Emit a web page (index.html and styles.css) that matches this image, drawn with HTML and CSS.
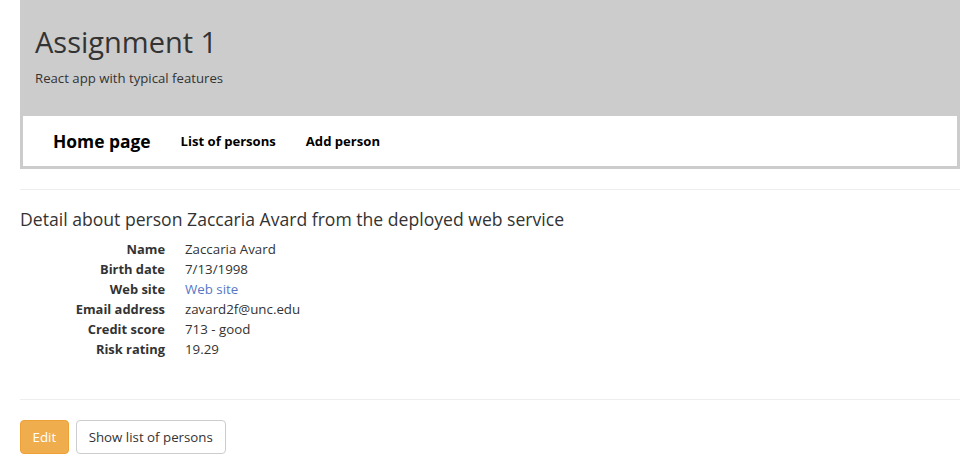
FILE: index.html
```html
<!DOCTYPE html>
<html>
<head>
<meta charset="utf-8">
<link rel="stylesheet" href="styles.css">
</head>
<body>
<div class="page">
  <header class="jumbo">
    <h1 class="title">Assignment 1</h1>
    <p class="subtitle">React app with typical features</p>
  </header>
  <nav class="nav">
    <a class="brand">Home page</a>
    <a class="link">List of persons</a>
    <a class="link">Add person</a>
  </nav>
  <hr class="rule rule-top">
  <h2 class="heading">Detail about person Zaccaria Avard from the deployed web service</h2>
  <dl class="details">
    <dt>Name</dt><dd>Zaccaria Avard</dd>
    <dt>Birth date</dt><dd>7/13/1998</dd>
    <dt>Web site</dt><dd><a class="site">Web site</a></dd>
    <dt>Email address</dt><dd>zavard2f@unc.edu</dd>
    <dt>Credit score</dt><dd>713 - good</dd>
    <dt>Risk rating</dt><dd>19.29</dd>
  </dl>
  <hr class="rule rule-bottom">
  <div class="actions">
    <button class="btn btn-warning">Edit</button>
    <button class="btn btn-default">Show list of persons</button>
  </div>
</div>
</body>
</html>
```

FILE: styles.css
```css
html, body {
  margin: 0;
  padding: 0;
  background: #fff;
}
body {
  font-family: "Open Sans", "Noto Sans", sans-serif;
  font-size: 13.3px;
  line-height: 20px;
  color: #333;
}
.page {
  padding: 0 20px;
}
.jumbo {
  background: #ccc;
  height: 116px;
  padding: 0 15px;
  box-sizing: border-box;
  overflow: hidden;
}
.title {
  margin: 26px 0 0;
  font-size: 29px;
  line-height: 32px;
  font-weight: 400;
  color: #333;
}
.subtitle {
  margin: 10px 0 0;
  font-size: 13.2px;
  line-height: 20px;
}
.nav {
  display: flex;
  align-items: center;
  height: 50px;
  background: #fff;
  border: 3px solid #ccc;
  border-top: 0;
  padding-left: 30px;
  gap: 30px;
}
.nav a {
  color: #000;
  font-weight: 700;
  text-decoration: none;
}
.brand {
  font-size: 17.4px;
}
.link {
  font-size: 13.1px;
}
.rule {
  border: 0;
  border-top: 1px solid #eee;
  margin: 0;
}
.rule-top {
  margin-top: 20px;
}
.heading {
  margin: 19px 0 0;
  font-size: 17.6px;
  line-height: 20px;
  font-weight: 400;
  color: #333;
}
.details {
  display: grid;
  grid-template-columns: 145px 1fr;
  column-gap: 20px;
  margin: 10px 0 0;
}
.details dt {
  font-weight: 700;
  font-size: 12.9px;
  text-align: right;
}
.details dd {
  margin: 0;
}
.site {
  color: #5677c7;
  text-decoration: none;
}
.rule-bottom {
  margin-top: 40px;
}
.actions {
  display: flex;
  gap: 7px;
  margin-top: 20px;
}
.btn {
  font-family: inherit;
  font-size: 13.3px;
  line-height: 20px;
  padding: 6px 12px;
  border-radius: 4px;
  border: 1px solid transparent;
  height: 34px;
  box-sizing: border-box;
}
.btn-warning {
  background: #f0ad4e;
  border-color: #eea236;
  color: #fff;
  padding: 6px 11.5px;
}
.btn-default {
  background: #fff;
  border-color: #ccc;
  color: #333;
}
```
